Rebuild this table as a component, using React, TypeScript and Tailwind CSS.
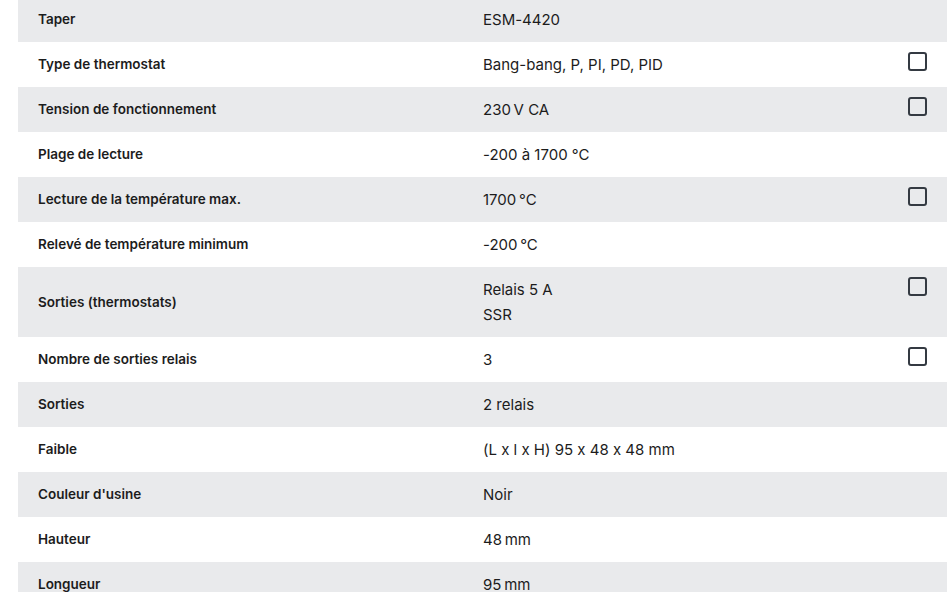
import React from "react";

type Row = { label: string; values: string[]; check?: boolean };

const rows: Row[] = [
  { label: "Taper", values: ["ESM-4420"] },
  { label: "Type de thermostat", values: ["Bang-bang, P, PI, PD, PID"], check: true },
  { label: "Tension de fonctionnement", values: ["230\u2009V CA"], check: true },
  { label: "Plage de lecture", values: ["-200 à 1700 °C"] },
  { label: "Lecture de la température max.", values: ["1700\u2009°C"], check: true },
  { label: "Relevé de température minimum", values: ["-200\u2009°C"] },
  { label: "Sorties (thermostats)", values: ["Relais 5 A", "SSR"], check: true },
  { label: "Nombre de sorties relais", values: ["3"], check: true },
  { label: "Sorties", values: ["2 relais"] },
  { label: "Faible", values: ["(L x l x H) 95 x 48 x 48 mm"] },
  { label: "Couleur d'usine", values: ["Noir"] },
  { label: "Hauteur", values: ["48\u2009mm"] },
  { label: "Longueur", values: ["95\u2009mm"] },
];

export default function App() {
  return (
    <div
      className="w-[947px] h-[592px] overflow-hidden bg-white text-[#1c1c1c] [font-feature-settings:'calt'_0]"
      style={{ fontFamily: "Inter, 'Liberation Sans', sans-serif" }}
    >
      <div className="ml-[18px] -mt-[3px] w-[929px]">
        {rows.map((r, i) => (
          <div
            key={i}
            className={`flex ${i % 2 === 0 ? "bg-[#e9eaec]" : "bg-white"}`}
          >
            <div className="w-[445px] pl-[20px] flex items-center text-[13.5px] font-semibold leading-[25px] py-[10px]">
              {r.label}
            </div>
            <div className="flex-1 pl-[20px] py-[10px] text-[15px] leading-[25px]">
              {r.values.map((v, j) => (
                <div key={j}>{v}</div>
              ))}
            </div>
            <div className="w-[59px] pt-[10px] pl-[20px]">
              {r.check && (
                <div className="w-[19px] h-[19px] border-2 border-[#343a42] rounded-[3px]" />
              )}
            </div>
          </div>
        ))}
      </div>
    </div>
  );
}
